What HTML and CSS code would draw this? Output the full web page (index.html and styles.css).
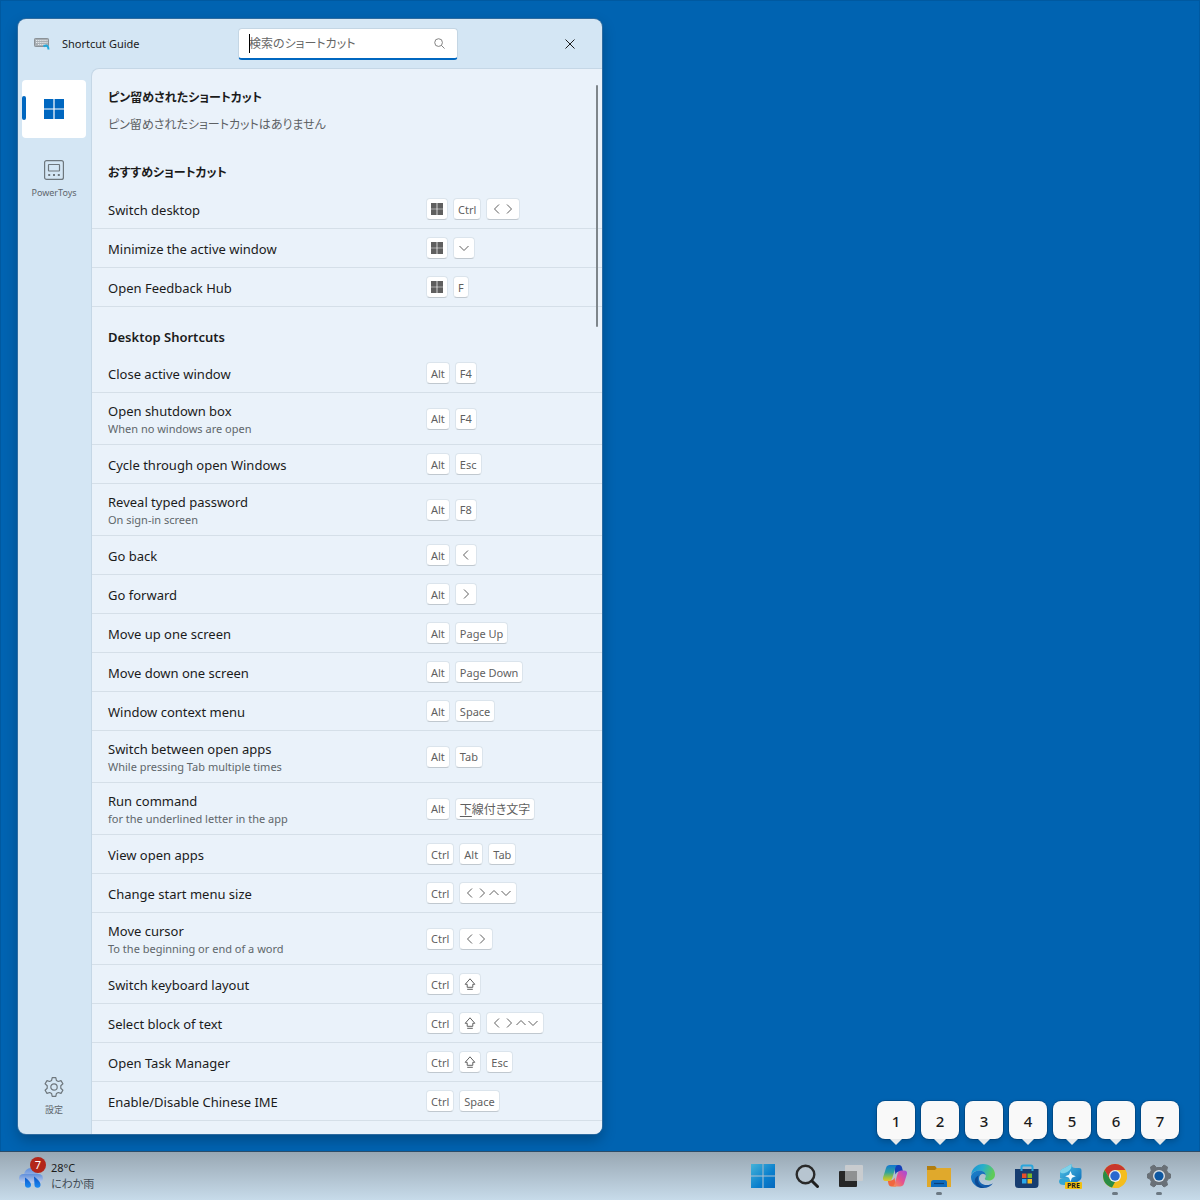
FILE: index.html
```html
<!doctype html>
<html lang="ja">
<head>
<meta charset="utf-8">
<title>Shortcut Guide</title>
<link rel="stylesheet" href="styles.css">
</head>

<body>
<!-- shared glyphs for the keys -->
<svg class="symbols" aria-hidden="true">
	<symbol id="win" viewBox="0 0 20 20"><path fill="currentColor" d="M0 0h9.4v9.4H0zM10.6 0H20v9.4h-9.4zM0 10.6h9.4V20H0zM10.6 10.6H20V20h-9.4z"/></symbol>
	<symbol id="left" viewBox="0 0 12 12"><path d="M8 1.5 3.5 6 8 10.5"/></symbol>
	<symbol id="right" viewBox="0 0 12 12"><path d="M4 1.5 8.5 6 4 10.5"/></symbol>
	<symbol id="up" viewBox="0 0 12 12"><path d="M1.5 8 6 3.5 10.5 8"/></symbol>
	<symbol id="down" viewBox="0 0 12 12"><path d="M1.5 4 6 8.5 10.5 4"/></symbol>
	<symbol id="shift" viewBox="0 0 12 12"><path d="M6 .8 1.2 6.3h2v3h5.6v-3h2zM3.2 11.3h5.6"/></symbol>
</svg>

<main class="desktop">
	<section class="window">
		<header class="titlebar">
			<div class="title">
				<svg width="16" height="16" viewBox="0 0 16 16">
					<rect x=".5" y="2.500" width="14" height="8" rx=".8" fill="#a9afb4" stroke="#8b9297"/>
					<path d="M2 4.500h11.500M2 6.500h11.500M4 8.500h8" stroke="#e6eaed" stroke-dasharray="1.300 .8"/>
					<path d="M9.500 10.500c3-2 5-.5 5 3" fill="none" stroke="#21a8dc" stroke-width="2"/>
				</svg>
				<h1>Shortcut Guide</h1>
			</div>
			<div class="search">
				<input type="search" placeholder="検索のショートカット" aria-label="検索のショートカット">
				<span class="caret"></span>
				<svg width="11" height="11" viewBox="0 0 12 12"><circle cx="5" cy="5" r="4.2"/><path d="M8 8l3.500 3.500"/></svg>
			</div>
			<button class="close" type="button" aria-label="閉じる">
				<svg width="10" height="10" viewBox="0 0 10 10"><path d="M.5.5l9 9M9.500.5l-9 9"/></svg>
			</button>
		</header>

		<nav class="sidebar">
			<button class="tab active" type="button" aria-label="Windows">
				<svg width="20" height="20"><use href="#win"/></svg>
			</button>
			<button class="tab" type="button">
				<svg class="line" width="20" height="20" viewBox="0 0 20 20">
					<rect x=".6" y=".6" width="18.800" height="18.800" rx="2"/>
					<rect x="4.500" y="4.500" width="11" height="6.500" rx=".5"/>
					<path d="M4.200 15h2M9 15h2M13.800 15h2" stroke-width="1.800"/>
				</svg>
				<span>PowerToys</span>
			</button>
			<button class="tab settings" type="button">
				<svg class="line" width="20" height="20" viewBox="0 0 20 20">
					<path d="M8.200.7h3.600l.6 2.700 1.900 1.100 2.700-.9 1.900 3.200-2.100 1.900v2.600l2.100 1.900-1.900 3.200-2.700-.9-1.900 1.100-.6 2.700H8.200l-.6-2.700-1.900-1.100-2.700.9-1.900-3.200 2.100-1.900V8.700L1.100 6.800 3 3.600l2.700.9 1.900-1.100z" stroke-linejoin="round"/>
					<circle cx="10" cy="10" r="3.200"/>
				</svg>
				<span>設定</span>
			</button>
		</nav>

		<div class="pane">
			<div class="content">
				<section class="group">
					<h2 class="ja">ピン留めされたショートカット</h2>
					<p>ピン留めされたショートカットはありません</p>
				</section>

				<section class="group">
					<h2 class="ja">おすすめショートカット</h2>
					<ul>
						<li><div class="name">Switch desktop</div><div class="keys"><kbd><svg><use href="#win"/></svg></kbd><kbd>Ctrl</kbd><kbd><svg><use href="#left"/></svg><svg><use href="#right"/></svg></kbd></div></li>
						<li><div class="name">Minimize the active window</div><div class="keys"><kbd><svg><use href="#win"/></svg></kbd><kbd><svg><use href="#down"/></svg></kbd></div></li>
						<li><div class="name">Open Feedback Hub</div><div class="keys"><kbd><svg><use href="#win"/></svg></kbd><kbd>F</kbd></div></li>
					</ul>
				</section>

				<section class="group">
					<h2>Desktop Shortcuts</h2>
					<ul>
						<li><div class="name">Close active window</div><div class="keys"><kbd>Alt</kbd><kbd>F4</kbd></div></li>
						<li><div class="name">Open shutdown box<small>When no windows are open</small></div><div class="keys"><kbd>Alt</kbd><kbd>F4</kbd></div></li>
						<li><div class="name">Cycle through open Windows</div><div class="keys"><kbd>Alt</kbd><kbd>Esc</kbd></div></li>
						<li><div class="name">Reveal typed password<small>On sign-in screen</small></div><div class="keys"><kbd>Alt</kbd><kbd>F8</kbd></div></li>
						<li><div class="name">Go back</div><div class="keys"><kbd>Alt</kbd><kbd><svg><use href="#left"/></svg></kbd></div></li>
						<li><div class="name">Go forward</div><div class="keys"><kbd>Alt</kbd><kbd><svg><use href="#right"/></svg></kbd></div></li>
						<li><div class="name">Move up one screen</div><div class="keys"><kbd>Alt</kbd><kbd>Page Up</kbd></div></li>
						<li><div class="name">Move down one screen</div><div class="keys"><kbd>Alt</kbd><kbd>Page Down</kbd></div></li>
						<li><div class="name">Window context menu</div><div class="keys"><kbd>Alt</kbd><kbd>Space</kbd></div></li>
						<li><div class="name">Switch between open apps<small>While pressing Tab multiple times</small></div><div class="keys"><kbd>Alt</kbd><kbd>Tab</kbd></div></li>
						<li><div class="name">Run command<small>for the underlined letter in the app</small></div><div class="keys"><kbd>Alt</kbd><kbd class="ja"><u>下</u>線付き文字</kbd></div></li>
						<li><div class="name">View open apps</div><div class="keys"><kbd>Ctrl</kbd><kbd>Alt</kbd><kbd>Tab</kbd></div></li>
						<li><div class="name">Change start menu size</div><div class="keys"><kbd>Ctrl</kbd><kbd><svg><use href="#left"/></svg><svg><use href="#right"/></svg><svg><use href="#up"/></svg><svg><use href="#down"/></svg></kbd></div></li>
						<li><div class="name">Move cursor<small>To the beginning or end of a word</small></div><div class="keys"><kbd>Ctrl</kbd><kbd><svg><use href="#left"/></svg><svg><use href="#right"/></svg></kbd></div></li>
						<li><div class="name">Switch keyboard layout</div><div class="keys"><kbd>Ctrl</kbd><kbd><svg><use href="#shift"/></svg></kbd></div></li>
						<li><div class="name">Select block of text</div><div class="keys"><kbd>Ctrl</kbd><kbd><svg><use href="#shift"/></svg></kbd><kbd><svg><use href="#left"/></svg><svg><use href="#right"/></svg><svg><use href="#up"/></svg><svg><use href="#down"/></svg></kbd></div></li>
						<li><div class="name">Open Task Manager</div><div class="keys"><kbd>Ctrl</kbd><kbd><svg><use href="#shift"/></svg></kbd><kbd>Esc</kbd></div></li>
						<li><div class="name">Enable/Disable Chinese IME</div><div class="keys"><kbd>Ctrl</kbd><kbd>Space</kbd></div></li>
					</ul>
				</section>
			</div>
			<span class="thumb"></span>
		</div>
	</section>
</main>

<footer class="taskbar">
	<button class="weather" type="button">
		<span class="weather-icon">
			<svg width="24" height="20" viewBox="0 0 24 20">
				<defs><linearGradient id="cloud" x1="0" y1="0" x2="0" y2="1"><stop offset="0" stop-color="#5f8fdc"/><stop offset="1" stop-color="#c3cfea"/></linearGradient>
				<linearGradient id="drop" x1="0" y1="0" x2="0" y2="1"><stop offset="0" stop-color="#0c52c4"/><stop offset="1" stop-color="#1a8cf5"/></linearGradient></defs>
				<circle cx="12" cy="7" r="7" fill="url(#cloud)"/>
				<rect x="0" y="6" width="24" height="9" rx="4.500" fill="url(#cloud)"/>
				<path fill="url(#drop)" d="M6 9.500c3.500 2.500 6 5 6 7.300a3 3 0 0 1-6 0zM15 8.500c3.500 2.500 6.500 5.500 6.500 8a3 3 0 0 1-6 .5z"/>
			</svg>
			<span class="count">7</span>
		</span>
		<span class="weather-text">28°C<span>にわか雨</span></span>
	</button>

	<nav class="apps">
		<button type="button" aria-label="スタート">
			<svg width="24" height="24" viewBox="0 0 24 24">
				<defs><linearGradient id="start" x1="0" y1="0" x2="24" y2="24" gradientUnits="userSpaceOnUse"><stop offset="0" stop-color="#45b3d8"/><stop offset=".6" stop-color="#0a7fcd"/><stop offset="1" stop-color="#0668bd"/></linearGradient></defs>
				<path fill="url(#start)" d="M0 0h11.500v11.500H0zM12.500 0H24v11.500H12.500zM0 12.500h11.500V24H0zM12.500 12.500H24V24H12.500z"/>
			</svg>
		</button>
		<button type="button" aria-label="検索">
			<svg width="24" height="24" viewBox="0 0 24 24"><circle cx="10.500" cy="10.500" r="8.800" fill="#b7c5d0" stroke="#2a2a2a" stroke-width="2.400"/><path d="M17 17l5.500 5.500" stroke="#1f1f1f" stroke-width="3" stroke-linecap="round"/></svg>
		</button>
		<button type="button" aria-label="タスク ビュー">
			<svg width="24" height="24" viewBox="0 0 24 24"><rect x="0" y="7" width="18" height="16" rx="1" fill="#262626"/><rect x="6" y="1" width="18" height="16" rx="1" fill="#c9cccf"/><path fill="#8f9192" d="M6 7h12v10H6z"/></svg>
		</button>
		<button type="button" aria-label="Copilot">
			<span class="tip">1</span>
			<svg width="24" height="24" viewBox="0 0 24 24">
				<defs><linearGradient id="cpa" x1="0" y1="0" x2="0" y2="1"><stop offset="0" stop-color="#1478d0"/><stop offset=".45" stop-color="#2fa39d"/><stop offset=".8" stop-color="#a5c33b"/><stop offset="1" stop-color="#e8c12d"/></linearGradient>
				<linearGradient id="cpb" x1="1" y1="0" x2="0" y2="1"><stop offset="0" stop-color="#a04be0"/><stop offset=".5" stop-color="#e6518e"/><stop offset="1" stop-color="#f79a4a"/></linearGradient></defs>
				<path fill="#1340b8" d="M11 1h5c1.800 0 2.600 1 3 2.500L20 7.500h-3.500c-2.300 0-3.300 1-4 3z"/>
				<path fill="#f0673f" d="M13 22.500H8.500c-1.800 0-2.600-1-3-2.500l-.8-3.500H7.500c2.300 0 3.300-1 4-3z"/>
				<path fill="url(#cpa)" d="M7 1h8c-1.800.3-2.300 1.500-2.700 3L9.500 13.500c-.8 2.400-1.700 3.500-4 3.500H3c-2.600 0-3.500-1.500-2.800-4L3 4C3.700 1.800 5 1 7 1z"/>
				<path fill="url(#cpb)" d="M17 22.500H9c1.800-.3 2.300-1.500 2.700-3L14.500 10c.8-2.400 1.700-3.500 4-3.500H21c2.600 0 3.500 1.500 2.800 4L21 19.500c-.7 2.200-2 3-4 3z"/>
			</svg>
		</button>
		<button class="running" type="button" aria-label="エクスプローラー">
			<span class="tip">2</span>
			<svg width="24" height="24" viewBox="0 0 24 24">
				<path fill="#b27d0e" d="M0 2h8l2 2.500-2 3H0z"/><path fill="#e0a92c" d="M0 6h8l2-2h14v19H0z"/>
				<path fill="#0f6cbd" d="M4 23v-4.500a2.500 2.500 0 0 1 2.500-2.500h11a2.500 2.500 0 0 1 2.500 2.500V23z"/><path stroke="#0a3f78" stroke-width="1.200" d="M7 19.500h10"/>
			</svg>
		</button>
		<button type="button" aria-label="Edge">
			<span class="tip">3</span>
			<svg width="24" height="24" viewBox="0 0 24 24">
				<defs><linearGradient id="eda" x1="0" y1="0" x2="1" y2=".3"><stop offset="0" stop-color="#1c8fd6"/><stop offset=".5" stop-color="#28aecb"/><stop offset="1" stop-color="#5fcb58"/></linearGradient>
				<linearGradient id="edb" x1="0" y1="0" x2="1" y2="1"><stop offset="0" stop-color="#1b84cf"/><stop offset="1" stop-color="#124f9e"/></linearGradient></defs>
				<path fill="url(#eda)" d="M.2 10.500C1 4.500 5.800 0 12 0c7 0 12 5 12 10.500 0 3.500-2.500 6-6 6-2.500 0-4.200-.8-4.200-1.700 0-.7 1-1.200 1-3C14.800 9 12 6.500 8.500 6.500c-4.500 0-7.300 2.500-8.300 4z"/>
				<path fill="url(#edb)" d="M0 12.500C.6 9 4 6.500 8.500 6.500c3.800 0 6.300 2.500 6.300 5-.5-1-1.700-1.700-3-1.700-2.200 0-3.800 2.200-3.800 4.700 0 4 3.500 6.500 7.500 6.500 2.800 0 5-.8 6.500-1.800C20 22.300 16.500 24 12 24 5 24-.3 18.500 0 12.500z"/>
				<path fill="#0d4a93" d="M7.500 11.500c-2 5 .5 11 6 12.400C6.500 24.500 3 19.500 4 15.500c.4-1.700 1.800-3.200 3.500-4z"/>
			</svg>
		</button>
		<button type="button" aria-label="Microsoft Store">
			<span class="tip">4</span>
			<svg width="24" height="24" viewBox="0 0 24 24">
				<path fill="#173d70" d="M0 5h23.500v15.500A3.500 3.500 0 0 1 20 24H3.500A3.500 3.500 0 0 1 0 20.500z"/>
				<path d="M6.500 7V3A1.500 1.500 0 0 1 8 1.500h8A1.500 1.500 0 0 1 17.500 3v4" fill="none" stroke="#2aa5dc" stroke-width="2"/>
				<path fill="#e8502a" d="M7 9.500h4.500V14H7z"/><path fill="#7ab829" d="M12.500 9.500H17V14h-4.500z"/><path fill="#29a8ea" d="M7 15h4.500v4.500H7z"/><path fill="#f9b81c" d="M12.500 15H17v4.500h-4.500z"/>
			</svg>
		</button>
		<button type="button" aria-label="PowerToys Preview">
			<span class="tip">5</span>
			<svg width="24" height="24" viewBox="0 0 24 24">
				<defs><linearGradient id="pre" x1="0" y1="0" x2="1" y2="1"><stop offset="0" stop-color="#4fc4e6"/><stop offset="1" stop-color="#0a6ab8"/></linearGradient></defs>
				<path fill="url(#pre)" d="M1 8.500C1 6 3 5 5.500 4L12.500 0c0 3 1.500 4 4 4H20c2 0 2.500 1 2.500 3v6c0 3-3 4.500-6 5.500l-5 2.500V15L1 14z"/>
				<path fill="#7fd3ea" d="M1 8c1.500 2 5 1.500 8-.5 3-2 4-4.500 3.500-7.500L5.500 4C3 5 1 6 1 8z"/>
				<path fill="#35a6d4" d="M0 17.500c0-2.500 2-3.500 5-3.500h6.500v7H5c-3 0-5-1-5-3.500z"/>
				<path fill="#f1fafd" d="m11.500 7 1.500 3.800 3.800 1.500-3.800 1.500-1.500 3.800-1.500-3.800-3.800-1.500 3.800-1.500z"/>
			</svg>
			<span class="pre">PRE</span>
		</button>
		<button class="running" type="button" aria-label="Chrome">
			<span class="tip">6</span>
			<svg width="24" height="24" viewBox="0 0 24 24">
				<circle cx="12" cy="12" r="12" fill="#f4bd1d"/>
				<path fill="#c8372d" d="M1.600 6a12 12 0 0 1 20.800 0H12L7 15z"/>
				<path fill="#2a8c45" d="M1.600 6 7 15l5 3-3 5.600A12 12 0 0 1 1.600 6z"/>
				<path fill="#f4bd1d" d="M12 6h10.400A12 12 0 0 1 10.500 23.900L17 15z"/>
				<circle cx="12" cy="12" r="6" fill="#e9eef2"/><circle cx="12" cy="12" r="4.700" fill="#2a67cf"/>
			</svg>
		</button>
		<button class="running" type="button" aria-label="設定">
			<span class="tip">7</span>
			<svg width="24" height="24" viewBox="0 0 24 24">
				<path fill="#697077" stroke="#697077" stroke-linejoin="round" d="M9.500 3.500 7 1 3.500 3l.8 3.500L3 9l-2.500 1v4L3 15l1.300 2.500L3.500 21 7 23l2.500-2.500h5L17 23l3.500-2-.8-3.500L21 15l2.500-1v-4L21 9l-1.300-2.500L20.500 3 17 1l-2.500 2.500z"/>
				<circle cx="12" cy="12" r="6" fill="#d9e0e6"/><circle cx="12" cy="12" r="4.600" fill="#0d57a1"/>
			</svg>
		</button>
	</nav>
</footer>
</body>
</html>
```
FILE: styles.css
```css
*
{
	box-sizing: border-box;
}
body
{
	margin: 0;
	height: 100vh;
	display: flex;
	flex-direction: column;
	background-color: #0063b1;
	color: #1b1b1b;
	font-family: "Noto Sans", "Noto Sans CJK JP", sans-serif;
	font-feature-settings: "palt";
	font-size: 13px;
}
button
{
	border: none;
	padding: 0;
	background: none;
	color: inherit;
	font: inherit;
	font-feature-settings: inherit;
	cursor: pointer;
}
svg
{
	display: block;
}
.symbols
{
	display: none;
}

/* desktop */
.desktop
{
	flex: 1;
	min-height: 0;
	padding: 18px 17px 17px;
	border: 1px solid #0059a0;
	border-bottom: none;
	display: flex;
}

/* guide window */
.window
{
	width: 100%;
	max-width: 584px;
	display: grid;
	grid-template-columns: 73px 1fr;
	grid-template-rows: 49px 1fr;
	background-color: #d4e6f4;
	border-radius: 8px;
	overflow: hidden;
	box-shadow: 0 0 0 1px #2d6ba0, 0 6px 14px rgba(0,0,0,0.25);
}
.titlebar
{
	grid-column: 1 / 3;
	display: grid;
	grid-template-columns: 1fr 220px 144px;
	align-items: center;
}
.title
{
	display: flex;
	align-items: center;
	gap: 12px;
	padding-left: 16px;
}
.title h1
{
	margin: 0;
	font-size: 11px;
	font-weight: 400;
}
.search
{
	position: relative;
	display: flex;
	align-items: center;
	height: 32px;
	padding: 0 12px 0 10px;
	background-color: #fff;
	border: 1px solid #c4d6e4;
	border-bottom: 2px solid #0067c0;
	border-radius: 4px;
}
.search input
{
	flex: 1;
	min-width: 0;
	border: none;
	padding: 0;
	outline: none;
	background: none;
	font: inherit;
	font-feature-settings: inherit;
	font-size: 12px;
}
.search input::placeholder
{
	color: #666;
	opacity: 1;
}
.search svg
{
	fill: none;
	stroke: #777;
}
.caret
{
	position: absolute;
	left: 10px;
	top: 5px;
	width: 1px;
	height: 19px;
	background-color: #000;
}
.close
{
	justify-self: end;
	width: 64px;
	height: 48px;
	display: grid;
	place-items: center;
}
.close svg
{
	fill: none;
	stroke: #1b1b1b;
}

/* app list on the left */
.sidebar
{
	display: flex;
	flex-direction: column;
	gap: 13px;
	padding: 12px 5px 8px 4px;
}
.tab
{
	position: relative;
	height: 58px;
	display: flex;
	flex-direction: column;
	align-items: center;
	justify-content: center;
	gap: 6px;
	border-radius: 4px;
	color: #5f676d;
	font-size: 9px;
	line-height: 14px;
}
.tab .line
{
	fill: none;
	stroke: #6e777d;
	stroke-width: 1.2;
}
.tab.active
{
	background-color: #fff;
	color: #0067c0;
}
.tab.active::before
{
	content: "";
	position: absolute;
	left: 0;
	top: 16px;
	width: 4px;
	height: 24px;
	border-radius: 2px;
	background-color: #0067c0;
}
.settings
{
	margin-top: auto;
}

/* shortcut list */
.pane
{
	position: relative;
	min-height: 0;
	border-top: 1px solid #c5d7e6;
	border-left: 1px solid #c5d7e6;
	border-top-left-radius: 8px;
	background-color: #eaf2fa;
	overflow: hidden;
}
.content
{
	height: 100%;
	padding: 16px 0;
	overflow-y: auto;
	scrollbar-width: none;
}
.thumb
{
	position: absolute;
	top: 16px;
	right: 4px;
	width: 2px;
	height: 242px;
	border-radius: 1px;
	background-color: #7f868b;
}
.group + .group
{
	margin-top: 17px;
}
.group h2
{
	margin: 0 0 4px;
	padding: 0 16px;
	font-size: 13px;
	font-weight: 600;
	line-height: 26px;
}
.group h2.ja
{
	font-size: 12px;
}
.group p
{
	margin: 0;
	padding: 0 16px 8px;
	color: #5d6164;
	font-size: 12px;
	line-height: 20px;
}
.group ul
{
	margin: 0;
	padding: 0;
	list-style: none;
}
.group li
{
	display: grid;
	grid-template-columns: 1fr 176px;
	align-items: center;
	min-height: 39px;
	padding: 0 0 0 16px;
	border-bottom: 1px solid #d5dfe8;
}
.name
{
	padding: 8px 0 6px;
	line-height: 20px;
}
.name small
{
	display: block;
	margin-bottom: 2px;
	color: #60666a;
	font-size: 11px;
	line-height: 15px;
}
.keys
{
	display: flex;
	gap: 5px;
}
.keys kbd
{
	display: flex;
	align-items: center;
	height: 22px;
	padding: 0 4px;
	border: 1px solid #dbe4ec;
	border-bottom-color: #c0c8cf;
	border-radius: 4px;
	background-color: #fff;
	color: #5f5f5f;
	font-family: inherit;
	font-size: 11px;
}
.keys kbd.ja
{
	font-size: 12px;
}
.keys u
{
	text-underline-offset: 2px;
}
.keys svg
{
	width: 12px;
	height: 12px;
	fill: none;
	stroke: #5f5f5f;
	stroke-width: 1;
}
.keys use[href="#win"]
{
	stroke: none;
}

/* taskbar */
.taskbar
{
	height: 49px;
	padding: 0 19px;
	display: flex;
	justify-content: space-between;
	border-top: 1px solid #2c4c68;
	background: linear-gradient(#98a7b3, #c7dbea);
}
.weather
{
	display: flex;
	align-items: center;
	gap: 8px;
	text-align: left;
}
.weather-icon
{
	position: relative;
	padding-top: 3px;
}
.count
{
	position: absolute;
	left: 11px;
	top: -8px;
	width: 16px;
	height: 16px;
	border-radius: 8px;
	background-color: #b3261a;
	color: #fff;
	font-size: 11px;
	line-height: 16px;
	text-align: center;
}
.weather-text
{
	font-size: 11px;
	line-height: 16px;
}
.weather-text span
{
	display: block;
	color: #3f4a53;
}
.apps
{
	display: flex;
}
.apps button
{
	position: relative;
	width: 44px;
	display: grid;
	place-items: center;
}
.running::after
{
	content: "";
	position: absolute;
	bottom: 5px;
	left: 19px;
	width: 6px;
	height: 3px;
	border-radius: 2px;
	background-color: #6c7983;
}
/* number shown over each app button */
.tip
{
	position: absolute;
	left: 4px;
	bottom: 61px;
	width: 38px;
	height: 38px;
	border-radius: 8px;
	background-color: #f9f9f9;
	box-shadow: 0 0 0 1px rgba(0,40,80,0.3), 0 3px 6px rgba(0,0,0,0.2);
	font-size: 15px;
	font-weight: 500;
	line-height: 40px;
}
.tip::after
{
	content: "";
	position: absolute;
	left: 13px;
	top: 38px;
	border: 6px solid transparent;
	border-top-color: #e6e9eb;
	border-bottom: none;
}
.pre
{
	position: absolute;
	left: 16px;
	bottom: 11px;
	padding: 0 2px;
	border-radius: 1px;
	background-color: #f2c011;
	color: #1b1b1b;
	font-size: 7px;
	font-weight: 700;
	line-height: 7px;
}
```
